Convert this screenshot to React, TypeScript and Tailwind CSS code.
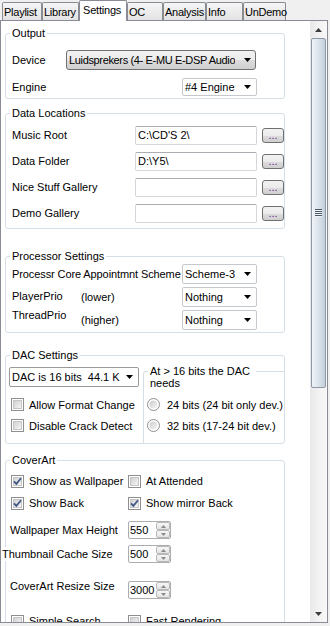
import type { ReactNode } from 'react'

const tabs = [
  { label: 'Playlist', cls: 'w-[40px]' },
  { label: 'Library', cls: 'w-[37px]' },
  { label: 'Settings', cls: 'w-[48px]', active: true },
  { label: 'OC', cls: 'w-[36px]' },
  { label: 'Analysis', cls: 'w-[43px]' },
  { label: 'Info', cls: 'w-[37px]' },
  { label: 'UnDemo', cls: 'w-[43px]' },
]

const folders = [
  { label: 'Music Root', value: "C:\\CD'S 2\\" },
  { label: 'Data Folder', value: 'D:\\Y5\\' },
  { label: 'Nice Stuff Gallery', value: '' },
  { label: 'Demo Gallery', value: '' },
]

function DownArrow({ color = '#000' }: { color?: string }) {
  return (
    <svg width="7" height="4" viewBox="0 0 7 4" className="shrink-0">
      <path d="M0 0h7L3.5 4z" fill={color} />
    </svg>
  )
}

function UpArrow({ color = '#000' }: { color?: string }) {
  return (
    <svg width="7" height="4" viewBox="0 0 7 4" className="shrink-0">
      <path d="M0 4h7L3.5 0z" fill={color} />
    </svg>
  )
}

function Group({ title, className, children }: { title: string; className: string; children: ReactNode }) {
  return (
    <div className={`ml-[4px] flex w-[280px] shrink-0 flex-col rounded-[3px] border border-[#d5dfe5] ${className}`}>
      <span className="-mt-[8px] ml-[4px] self-start bg-white px-[2px] leading-[14px]">{title}</span>
      {children}
    </div>
  )
}

function Combo({ text, className }: { text: string; className: string }) {
  return (
    <div className={`flex items-center justify-between rounded-[2px] border bg-white pl-[2px] pr-[5px] ${className}`}>
      <span className="whitespace-pre">{text}</span>
      <DownArrow />
    </div>
  )
}

function TextBox({ value }: { value: string }) {
  return (
    <div className="h-[19px] w-[122px] rounded-[2px] border border-[#d3d7dc] border-t-[#abadb3] bg-white pl-[2px] leading-[17px] whitespace-pre">
      {value}
    </div>
  )
}

function DotsButton() {
  return (
    <div className="ml-[5px] flex h-[15px] w-[22px] items-center justify-center rounded-[3px] border border-[#707070] bg-[linear-gradient(#f2f2f2,#ebebeb_50%,#dddddd_50%,#cfcfcf)] leading-[12px] text-[#6b1f8a]">
      ...
    </div>
  )
}

function CheckBox({ checked = false }: { checked?: boolean }) {
  return (
    <svg width="13" height="13" viewBox="0 0 13 13" className="shrink-0">
      <defs>
        <linearGradient id="cbg" x1="0" y1="0" x2="1" y2="1">
          <stop offset="0" stopColor="#cfcfcf" />
          <stop offset="1" stopColor="#f7f7f7" />
        </linearGradient>
      </defs>
      <rect x="0.5" y="0.5" width="12" height="12" fill="#fff" stroke="#8e8f8f" />
      <rect x="2.5" y="2.5" width="8" height="8" fill="url(#cbg)" stroke="#c6c6c6" />
      {checked && <path d="M3 6.3 5.4 8.9 10 3.3" fill="none" stroke="#3f5686" strokeWidth="1.7" />}
    </svg>
  )
}

function Radio() {
  return (
    <svg width="13" height="13" viewBox="0 0 13 13" className="shrink-0">
      <defs>
        <linearGradient id="rbg" x1="0" y1="0" x2="1" y2="1">
          <stop offset="0" stopColor="#cbcbcb" />
          <stop offset="1" stopColor="#f6f6f6" />
        </linearGradient>
      </defs>
      <circle cx="6.5" cy="6.5" r="6" fill="#fff" stroke="#8e8f8f" />
      <circle cx="6.5" cy="6.5" r="4" fill="url(#rbg)" />
    </svg>
  )
}

function Spin({ value }: { value: string }) {
  return (
    <div className="flex h-[18px] w-[43px] shrink-0 rounded-[2px] border border-[#abadb3] bg-white">
      <span className="flex-1 pl-[1px] leading-[16px]">{value}</span>
      <div className="flex w-[14px] flex-col">
        <div className="flex flex-1 items-center justify-center rounded-[2px] border border-[#b9b9b9] bg-gradient-to-b from-[#f7f7f7] to-[#e3e3e3]">
          <svg width="5" height="3" viewBox="0 0 5 3"><path d="M0 3h5L2.5 0z" fill="#8a8a8a" /></svg>
        </div>
        <div className="flex flex-1 items-center justify-center rounded-[2px] border border-[#b9b9b9] bg-gradient-to-b from-[#f7f7f7] to-[#e3e3e3]">
          <svg width="5" height="3" viewBox="0 0 5 3"><path d="M0 0h5L2.5 3z" fill="#8a8a8a" /></svg>
        </div>
      </div>
    </div>
  )
}

function Scrollbar() {
  return (
    <div className="flex w-[17px] shrink-0 flex-col bg-gradient-to-r from-[#e8e8e8] via-[#f2f2f2] to-[#f8f8f8]">
      <div className="flex h-[17px] items-center justify-center">
        <UpArrow color="#3c3c3c" />
      </div>
      <div className="mx-[1px] flex h-[350px] items-center justify-center rounded-[2px] border border-[#8d99a6] bg-gradient-to-r from-[#f1f4f8] via-[#dbe3ec] to-[#c4cfdb]">
        <svg width="7" height="8" viewBox="0 0 7 8">
          <path d="M0 0.5h7M0 2.5h7M0 4.5h7M0 6.5h7" stroke="#4c5866" />
          <path d="M0 1.5h7M0 3.5h7M0 5.5h7M0 7.5h7" stroke="#eef2f6" />
        </svg>
      </div>
      <div className="flex-1" />
      <div className="flex h-[17px] items-center justify-center">
        <DownArrow color="#3c3c3c" />
      </div>
    </div>
  )
}

export default function App() {
  return (
    <div className="h-[626px] w-[330px] overflow-hidden bg-[#f0f0f0] font-['Liberation_Sans',Arial,sans-serif] text-[11px] leading-[14px] text-black">
      <div className="relative z-10 flex h-[20px] items-end pl-[2px]">
        {tabs.map((t) =>
          t.active ? (
            <div
              key={t.label}
              className={`-mb-[1px] h-[21px] shrink-0 rounded-t-[2px] border border-b-0 border-[#898c95] bg-white pl-[3px] pt-[2px] tracking-[-0.2px] whitespace-nowrap ${t.cls}`}
            >
              {t.label}
            </div>
          ) : (
            <div
              key={t.label}
              className={`h-[18px] shrink-0 rounded-t-[2px] border border-b-0 border-[#898c95] bg-gradient-to-b from-[#f5f5f5] to-[#e3e3e3] pl-[1px] pt-[2px] tracking-[-0.25px] whitespace-nowrap ${t.cls}`}
            >
              {t.label}
            </div>
          )
        )}
      </div>

      <div className="flex h-[603px] w-[328px] border border-[#898c95] bg-white">
        <div className="flex w-[309px] shrink-0 flex-col overflow-hidden">
          <Group title="Output" className="mt-[12px] pb-[2px]">
            <div className="mt-[10px] flex h-[20px] items-center pl-[6px]">
              <span className="w-[54px] shrink-0">Device</span>
              <div className="flex h-[20px] w-[190px] items-center justify-between rounded-[3px] border border-[#707070] bg-[linear-gradient(#f2f2f2,#ebebeb_50%,#dddddd_50%,#cfcfcf)] pl-[2px] pr-[4px]">
                <span className="overflow-hidden whitespace-nowrap tracking-[-0.35px]">Luidsprekers (4- E-MU E-DSP Audio</span>
                <DownArrow />
              </div>
            </div>
            <div className="mt-[8px] flex h-[18px] items-center pl-[6px]">
              <span className="w-[170px] shrink-0">Engine</span>
              <Combo text="#4 Engine" className="h-[18px] w-[75px] border-[#c5c8cc]" />
            </div>
          </Group>

          <Group title="Data Locations" className="mt-[14px] pb-[2px]">
            <div className="mt-[2px] flex flex-col">
              {folders.map((f) => (
                <div key={f.label} className="flex h-[26px] items-center pl-[6px]">
                  <span className="w-[123px] shrink-0">{f.label}</span>
                  <TextBox value={f.value} />
                  <DotsButton />
                </div>
              ))}
            </div>
          </Group>

          <Group title="Processor Settings" className="mt-[27px] pb-[2px]">
            <div className="mt-[1px] flex flex-col gap-[3px]">
              <div className="flex h-[20px] items-center pl-[6px]">
                <span className="w-[170px] shrink-0 whitespace-nowrap tracking-[-0.1px]">Processr Core Appointmnt Scheme</span>
                <Combo text="Scheme-3" className="h-[20px] w-[75px] border-[#c5c8cc]" />
              </div>
              <div className="flex h-[20px] items-center pl-[6px]">
                <span className="-mt-[2px] w-[69px] shrink-0">PlayerPrio</span>
                <span className="w-[101px] shrink-0">(lower)</span>
                <Combo text="Nothing" className="h-[20px] w-[75px] border-[#c5c8cc]" />
              </div>
              <div className="flex h-[20px] items-center pl-[6px]">
                <span className="-mt-[2px] w-[69px] shrink-0 self-start">ThreadPrio</span>
                <span className="w-[101px] shrink-0">(higher)</span>
                <Combo text="Nothing" className="h-[20px] w-[75px] border-[#c5c8cc]" />
              </div>
            </div>
          </Group>

          <Group title="DAC Settings" className="mt-[22px] h-[89px]">
            <div className="flex flex-1">
              <div className="flex w-[137px] shrink-0 flex-col pl-[3px]">
                <Combo text="DAC is 16 bits  44.1 K" className="mt-[5px] h-[20px] w-[130px] border-[#9a9a9a]" />
                <div className="mt-[7px] flex h-[21px] items-center pl-[2px]">
                  <CheckBox />
                  <span className="ml-[5px] whitespace-nowrap">Allow Format Change</span>
                </div>
                <div className="flex h-[21px] items-center pl-[2px]">
                  <CheckBox />
                  <span className="ml-[5px] whitespace-nowrap">Disable Crack Detect</span>
                </div>
              </div>
              <div className="mt-[9px] flex flex-1 flex-col rounded-tl-[3px] border-l border-t border-[#d5dfe5]">
                <span className="-mt-[7px] ml-[4px] w-[108px] bg-white px-[2px] leading-[12px]">At &gt; 16 bits the DAC needs</span>
                <div className="mt-[5px] flex h-[21px] items-center pl-[3px]">
                  <Radio />
                  <span className="ml-[7px] whitespace-nowrap">24 bits (24 bit only dev.)</span>
                </div>
                <div className="flex h-[21px] items-center pl-[3px]">
                  <Radio />
                  <span className="ml-[7px] whitespace-nowrap">32 bits (17-24 bit dev.)</span>
                </div>
              </div>
            </div>
          </Group>

          <Group title="CoverArt" className="mt-[16px] pb-[4px]">
            <div className="mt-[3px] flex h-[22px] items-center pl-[5px]">
              <div className="flex w-[117px] shrink-0 items-center">
                <CheckBox checked />
                <span className="ml-[5px] whitespace-nowrap">Show as Wallpaper</span>
              </div>
              <div className="flex items-center">
                <CheckBox />
                <span className="ml-[5px] whitespace-nowrap">At Attended</span>
              </div>
            </div>
            <div className="flex h-[22px] items-center pl-[5px]">
              <div className="flex w-[117px] shrink-0 items-center">
                <CheckBox checked />
                <span className="ml-[5px] whitespace-nowrap">Show Back</span>
              </div>
              <div className="flex items-center">
                <CheckBox checked />
                <span className="ml-[5px] whitespace-nowrap">Show mirror Back</span>
              </div>
            </div>
            <div className="mt-[6px] flex h-[20px] items-center pl-[4px]">
              <span className="w-[118px] shrink-0 whitespace-nowrap">Wallpaper Max Height</span>
              <Spin value="550" />
            </div>
            <div className="mt-[4px] flex h-[20px] items-center">
              <span className="relative -ml-[4px] w-[126px] shrink-0 bg-white whitespace-nowrap">Thumbnail Cache Size</span>
              <Spin value="500" />
            </div>
            <div className="mt-[16px] flex h-[20px] items-center pl-[4px]">
              <span className="-mt-[8px] w-[118px] shrink-0 whitespace-nowrap">CoverArt Resize Size</span>
              <Spin value="3000" />
            </div>
            <div className="mt-[10px] flex h-[22px] items-center pl-[5px]">
              <div className="flex w-[117px] shrink-0 items-center">
                <CheckBox />
                <span className="ml-[5px] whitespace-nowrap">Simple Search</span>
              </div>
              <div className="flex items-center">
                <CheckBox />
                <span className="ml-[5px] whitespace-nowrap">Fast Rendering</span>
              </div>
            </div>
          </Group>
        </div>
        <Scrollbar />
      </div>
    </div>
  )
}
